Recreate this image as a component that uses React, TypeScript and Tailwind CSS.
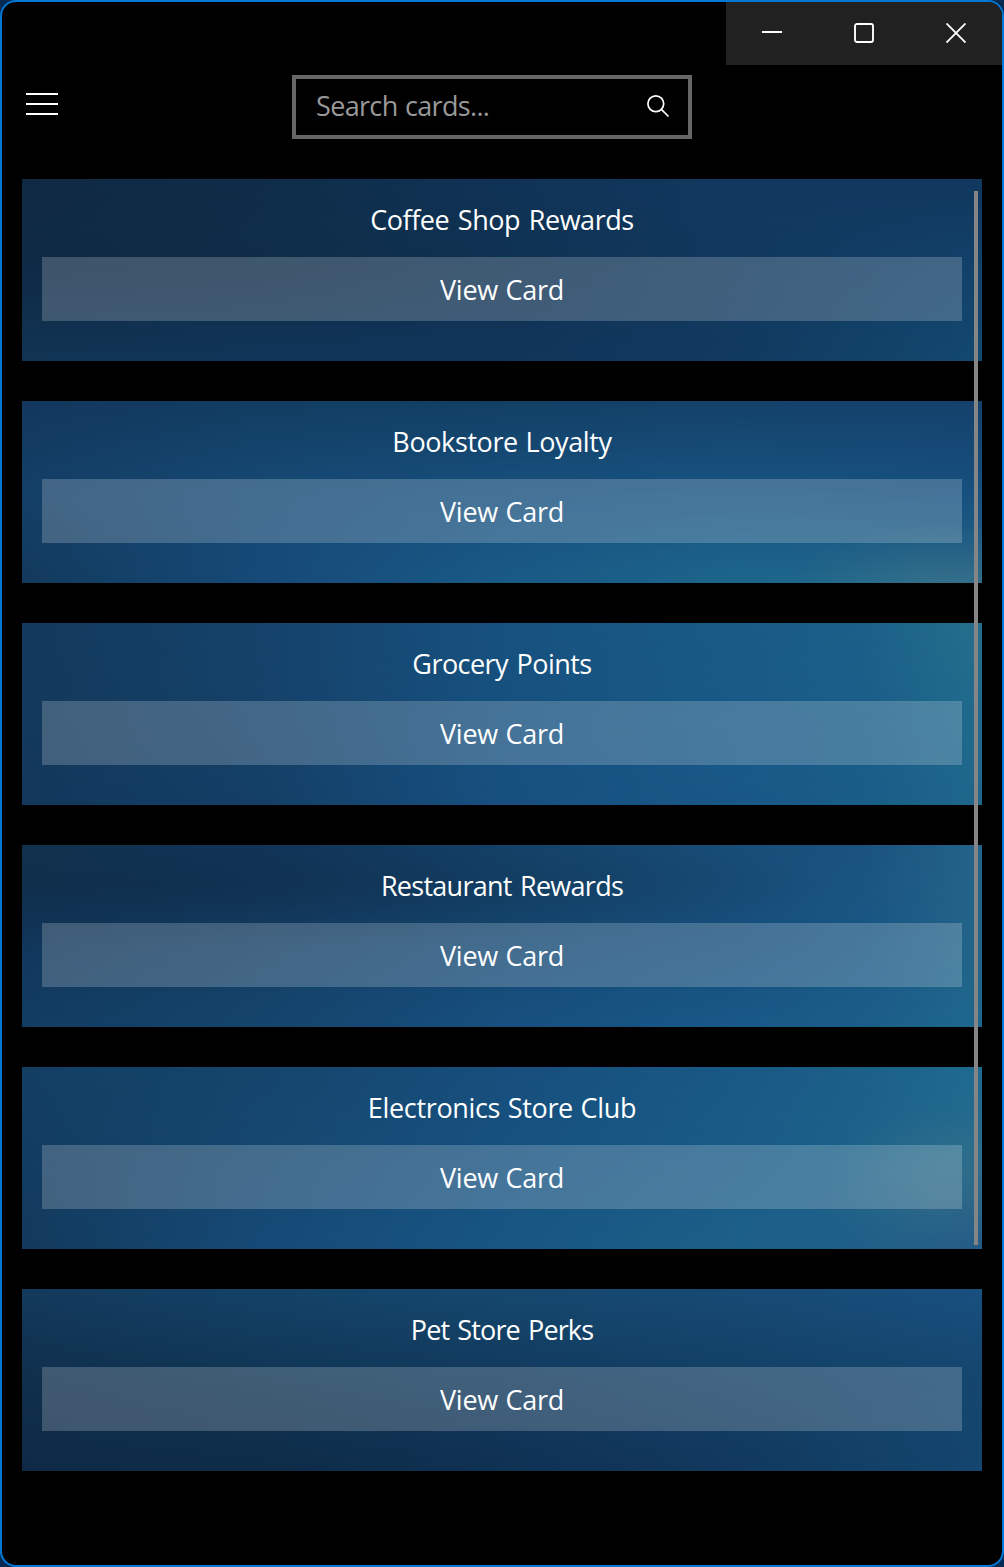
type LoyaltyCard = {
  name: string;
  tracking: string;
  // Horizontal colour ramps at the top, middle and bottom of the card.
  top: string;
  middle: string;
  bottom: string;
  // Soft local light or shade laid over the ramps.
  accent?: string;
};

const cards: LoyaltyCard[] = [
  {
    name: "Coffee Shop Rewards",
    tracking: "tracking-[-0.45px] [word-spacing:2px]",
    top: "bg-[linear-gradient(to_right,#102943,#0f2d49,#103356,#12385f,#11375d)]",
    middle: "bg-[linear-gradient(to_right,#0e2a46,#0f2d48,#0f3252,#11395e,#13426b)]",
    bottom: "bg-[linear-gradient(to_right,#123554,#103559,#11355a,#123a60,#134970)]",
  },
  {
    name: "Bookstore Loyalty",
    tracking: "tracking-[-0.39px] [word-spacing:1px]",
    top: "bg-[linear-gradient(to_right,#13375c,#123d61,#133f64,#14426a,#14416b)]",
    middle: "bg-[linear-gradient(to_right,#143f67,#164a75,#17507e,#185481,#17507f)]",
    bottom: "bg-[linear-gradient(to_right,#133a5c,#164a78,#1a5a87,#1d668b,#24668a)]",
    accent: "bg-[radial-gradient(ellipse_150px_60px_at_96%_100%,#ffe08a14,transparent)]",
  },
  {
    name: "Grocery Points",
    tracking: "tracking-[-0.54px] [word-spacing:2px]",
    top: "bg-[linear-gradient(to_right,#133a5c,#15426a,#17517f,#195b86_75%,#1b6089_88%,#266f8b)]",
    middle: "bg-[linear-gradient(to_right,#13395b,#15426a,#17517f,#195a87_75%,#1b5f89_88%,#216a8d)]",
    bottom: "bg-[linear-gradient(to_right,#12375b,#143f66,#175080,#195887_75%,#1a5d88_88%,#20678c)]",
  },
  {
    name: "Restaurant Rewards",
    tracking: "tracking-[-0.73px] [word-spacing:2px]",
    top: "bg-[linear-gradient(to_right,#12334f,#11365b,#15446b,#184d77_75%,#1a537e_88%,#25648a)]",
    middle: "bg-[linear-gradient(to_right,#11365a,#143f65,#154872,#174f7c_75%,#1a5784_88%,#24658a)]",
    bottom: "bg-[linear-gradient(to_right,#133d62,#15446c,#17507f,#195988_75%,#1b5e89_88%,#1f688e)]",
    accent: "bg-[radial-gradient(ellipse_700px_65px_at_12%_22%,#0e2a4699,transparent)]",
  },
  {
    name: "Electronics Store Club",
    tracking: "tracking-[-0.34px] [word-spacing:1px]",
    top: "bg-[linear-gradient(to_right,#133f62,#15456c,#174e7c,#195985_75%,#1c6089_88%,#1f6a90)]",
    middle: "bg-[linear-gradient(to_right,#133c61,#164870,#175280,#1a5c88_75%,#1d638a_88%,#286b8c)]",
    bottom: "bg-[linear-gradient(to_right,#133a5c,#164a77,#185684,#1d6088_75%,#205f88_88%,#225a86)]",
    accent: "bg-[radial-gradient(ellipse_110px_80px_at_95%_65%,#ffe08a0e,transparent)]",
  },
  {
    name: "Pet Store Perks",
    tracking: "tracking-[-0.87px] [word-spacing:2px]",
    top: "bg-[linear-gradient(to_right,#133a5c,#144267,#16486e,#174a75,#18507f)]",
    middle: "bg-[linear-gradient(to_right,#102f4c,#103553,#12395d,#134065,#15466e)]",
    bottom: "bg-[linear-gradient(to_right,#0e2a47,#0e2c48,#0f3153,#12395e,#14466f)]",
  },
];

function CardItem({ card }: { card: LoyaltyCard }) {
  return (
    <article className={`relative h-[182px] shrink-0 px-5 pt-5 ${card.bottom}`}>
      <div className={`absolute inset-0 ${card.middle} [mask-image:linear-gradient(to_bottom,black_50%,transparent)]`} />
      <div className={`absolute inset-0 ${card.top} [mask-image:linear-gradient(to_bottom,black,transparent_50%)]`} />
      {card.accent && <div className={`absolute inset-0 ${card.accent}`} />}
      <h2 className={`relative h-[58px] text-center leading-[42px] ${card.tracking}`}>{card.name}</h2>
      <button className="relative flex h-16 w-full items-center justify-center bg-white/20 pt-0.5 tracking-[-0.3px] [word-spacing:1px]">
        View Card
      </button>
    </article>
  );
}

export default function App() {
  return (
    <div className="h-[1567px] w-[1004px] bg-[#062a52]">
      <div className="relative flex h-full flex-col overflow-hidden rounded-[16px] border-2 border-[#0078d7] bg-black font-['Open_Sans',sans-serif] text-[27px] text-white">
        <div className="flex h-[63px] shrink-0 justify-end">
          <div className="flex w-[276px] bg-[#212121]">
            <button className="flex w-[92px] justify-center pt-[21px]" aria-label="Minimize">
              <svg width="20" height="20" viewBox="0 0 20 20" stroke="white" strokeWidth="2"><path d="M0 9H20" /></svg>
            </button>
            <button className="flex w-[92px] justify-center pt-[21px]" aria-label="Maximize">
              <svg width="20" height="20" viewBox="0 0 20 20" fill="none" stroke="white" strokeWidth="1.9"><rect x="1" y="1" width="18" height="18" rx="2" /></svg>
            </button>
            <button className="flex w-[92px] justify-center pt-[21px]" aria-label="Close">
              <svg width="20" height="20" viewBox="0 0 20 20" stroke="white" strokeWidth="1.9"><path d="M.5 .5L19.5 19.5M19.5 .5L.5 19.5" /></svg>
            </button>
          </div>
        </div>
        <header className="flex h-[114px] shrink-0 items-start pt-[10px] pl-6">
          <button className="mt-[18px] flex w-8 flex-col gap-2" aria-label="Menu">
            <span className="h-0.5 w-8 bg-white" />
            <span className="h-0.5 w-8 bg-white" />
            <span className="h-0.5 w-8 bg-white" />
          </button>
          <div className="ml-[234px] flex h-16 w-[400px] items-center justify-between border-4 border-[#666] pr-[18px] pl-5">
            <span className="pb-0.5 text-[#999] tracking-[-0.66px] [word-spacing:1px]">Search cards...</span>
            <svg className="mb-0.5" width="24" height="24" viewBox="0 0 24 24" fill="none" stroke="white" strokeWidth="1.7">
              <circle cx="9.8" cy="9.8" r="7.9" />
              <path d="M15.4 15.4L22.5 22.5" />
            </svg>
          </div>
        </header>
        <main className="flex flex-col gap-10 px-5">
          {cards.map((card) => <CardItem key={card.name} card={card} />)}
        </main>
        <div className="absolute top-[189px] right-[24px] h-[1054px] w-1 bg-[#858585]" />
      </div>
    </div>
  );
}
